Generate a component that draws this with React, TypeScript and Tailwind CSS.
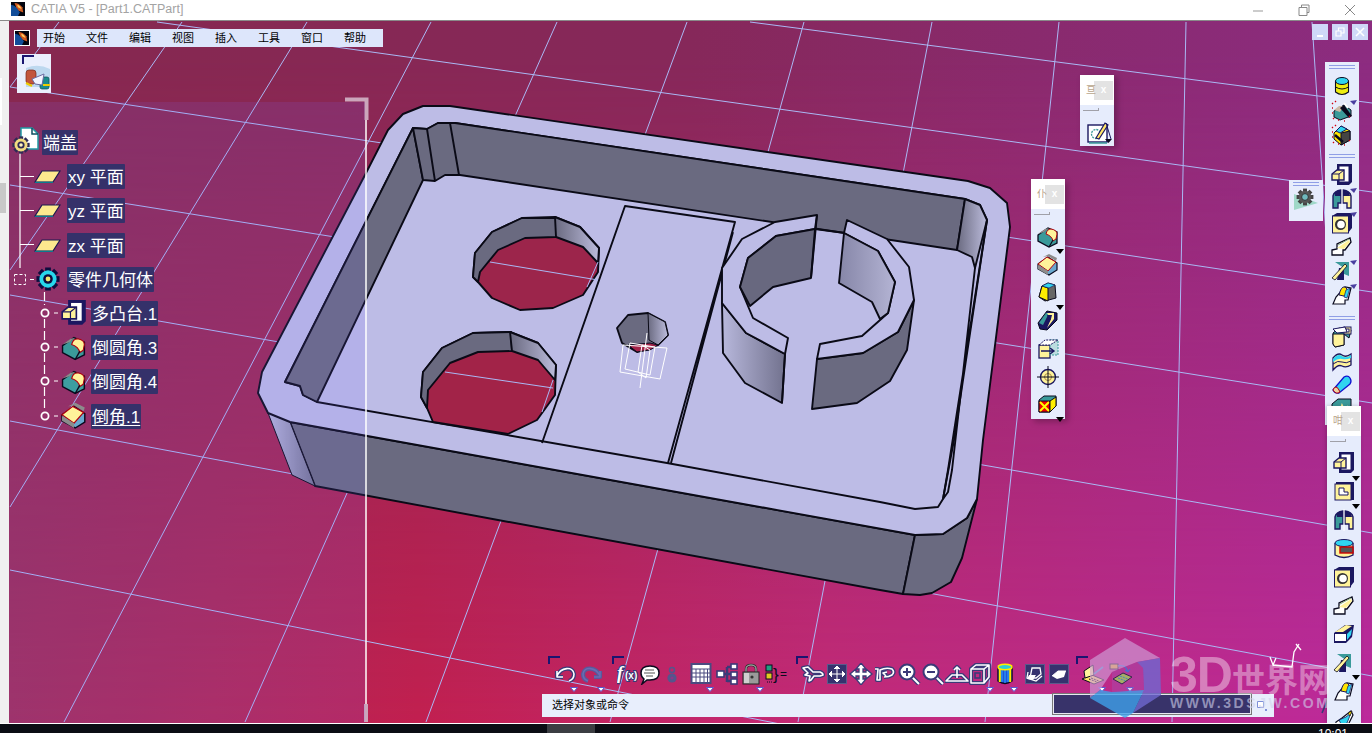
import React from "react";

const N = "#1b1760", Y = "#fff39a", T = "#3a9a9a", C = "#30d4f0", K = "#0a0a1e";

function G({ w = 22, h = 22, children }: { w?: number; h?: number; children: React.ReactNode }) {
  return <svg width={w} height={h} viewBox={`0 0 ${w} ${h}`}>{children}</svg>;
}

/* ---------- part design icons ---------- */
const Pad = () => (
  <G>
    <polygon points="6,0 21,0 21,18 18,21 6,21" fill={N} />
    <rect x="8.500" y="2.500" width="9" height="15" fill="#fff" />
    <polygon points="1,10 6,6 13,6 13,16 1,16" fill={Y} stroke={N} strokeWidth="1.4" />
    <path d="M1 10h7l5-4M8 10v6" stroke={N} fill="none" />
  </G>
);
const Pocket = () => (
  <G>
    <rect x="3" y="1" width="18" height="18" fill={N} />
    <rect x="2" y="3" width="16" height="16" fill={Y} stroke={N} />
    <path d="M6 7h5v4h4v3H6z" fill="#fff" stroke={N} />
  </G>
);
const Shaft = () => (
  <G>
    <path d="M2 20V8q1-5 8-6v13H7v5z" fill={T} stroke={N} strokeWidth="1.4" />
    <path d="M12 2q7 1 8 6v12h-4v-5h-4z" fill={Y} stroke={N} strokeWidth="1.4" />
    <path d="M4 4l6-2v6H4z" fill={N} />
    <path d="M12 2l6 2 1 4h-7z" fill={N} />
    <path d="M11 0v22" stroke="#fff" />
  </G>
);
const Groove = () => (
  <G>
    <path d="M2 5v12q9 5 18 0V5" fill={Y} stroke={N} strokeWidth="1.3" />
    <ellipse cx="11" cy="5" rx="9" ry="3.5" fill={C} stroke={N} />
    <rect x="7" y="9" width="13" height="6" fill="#555" stroke="#c00" strokeWidth="1.4" />
  </G>
);
const Hole = () => (
  <G>
    <polygon points="1,4 6,1 21,1 21,16 17,21 1,21" fill={N} />
    <rect x="1.500" y="4" width="16" height="17" fill={Y} stroke={N} />
    <circle cx="9.500" cy="12.500" r="5.500" fill="#333" />
    <circle cx="10" cy="12.500" r="3.800" fill="#fff" />
  </G>
);
const Rib = () => (
  <G>
    <path d="M1 14l5-1 0-5L19 2l1 4-6 8h-2v5H1z" fill="#fff" stroke={K} strokeWidth="1.3" />
    <polygon points="6,12 18,4 19,6 13,13" fill={Y} />
    <path d="M7 9l11-6" stroke="#8a7" />
  </G>
);
const Slot = () => (
  <G>
    <path d="M1 10L12 2h9l-2 12-6 6H1z" fill={N} />
    <polygon points="2,9 13,2 19,3 10,9" fill={Y} />
    <rect x="2" y="11" width="11" height="7" fill="#fff" />
    <polygon points="14,11 19,6 18,12 14,17" fill={C} />
  </G>
);
const Stiff = () => (
  <G>
    <polygon points="4,2 18,2 18,16 13,14 13,8" fill={T} />
    <polygon points="8,8 13,8 13,20 6,20" fill={N} />
    <polygon points="1,18 14,4 16,6 4,20" fill={Y} stroke={K} strokeWidth=".8" />
  </G>
);
const Loft = () => (
  <G>
    <path d="M2 20l3-7 9-10 6 1-3 12h-3v4z" fill="#fff" stroke={K} strokeWidth="1.2" />
    <path d="M8 11q2-9 6-8 3 1 2 8l-3 1z" fill="#ffe600" stroke={N} />
    <path d="M15 6l4-2-3 10-3-1z" fill={C} stroke={N} strokeWidth=".7" />
  </G>
);
const RemLoft = () => (
  <G>
    <path d="M2 20l1-7 6-4 9-7 2 4-5 10v4z" fill="#fff" stroke={K} strokeWidth="1.2" />
    <path d="M6 11l3 6 5-3 4-10-5 4z" fill={C} stroke={N} strokeWidth=".8" />
    <path d="M15 4l4-2-2 5z" fill="#ffe600" stroke={K} strokeWidth=".7" />
  </G>
);
const Fillet = ({ c = T }: { c?: string }) => (
  <G>
    <polygon points="1,9 11,2 20,6 20,17 12,21 1,15" fill={c} stroke={K} strokeWidth="1.3" />
    <polygon points="1,8 8,3 12,2 7,6" fill="#8c8c8c" />
    <path d="M9 8q1-5 5-5 6 1 6 5l-1 5-3 2q-1-5-7-7z" fill={Y} stroke="#b00010" strokeWidth="1" />
    <path d="M12 21l4-7" stroke={K} strokeWidth="1.2" />
  </G>
);
const Chamfer = () => (
  <G>
    <polygon points="1,10 11,3 20,9 20,16 12,21 1,15" fill="#69a8cf" stroke={K} strokeWidth="1.2" />
    <polygon points="1,10 10,3 19,8 11,17" fill={Y} stroke="#b00010" />
    <polygon points="6,3 12,0 20,4 19,7 11,2" fill="#8c8c8c" />
    <polygon points="1,11 11,17 11,21 1,15" fill="#8c8c8c" />
  </G>
);
const Draft = () => (
  <G>
    <polygon points="5,4 11,1 18,3 19,16 8,19 2,15" fill="#666" stroke={K} />
    <polygon points="5,4 11,6 11,19 2,15" fill="#ffee00" stroke={K} />
    <polygon points="5,4 11,1 18,3 12,6" fill={C} stroke={N} strokeWidth=".6" />
  </G>
);
const Shell = () => (
  <G>
    <polygon points="1,13 10,1 20,3 20,10 10,20 3,19" fill={N} stroke={K} />
    <polygon points="2,13 9,3 12,3 6,15" fill={T} />
    <path d="M10 3h7v6l-7 9 4-9z" fill={Y} />
    <path d="M10 5h5l-1 4-5 8 3-8z" fill={N} />
  </G>
);
const Thick = () => (
  <G>
    <rect x="2" y="7" width="11" height="13" fill={Y} stroke={N} strokeWidth="1.3" />
    <rect x="13" y="2" width="8" height="15" fill="#bcdde0" stroke={T} strokeDasharray="2 1" />
    <polygon points="2,7 8,2 21,2 13,7" fill="#fff" stroke={N} strokeDasharray="2 1" />
    <path d="M4 13h12M13 10l4 3-4 3" stroke={N} fill="none" strokeWidth="1.4" />
  </G>
);
const Target = () => (
  <G>
    <circle cx="11" cy="11" r="7.500" fill={Y} stroke={N} strokeWidth="1.4" />
    <circle cx="11" cy="11" r="3.500" fill="none" stroke="#aa8a40" />
    <path d="M11 0v22M0 11h22" stroke={K} />
  </G>
);
const CubeX = () => (
  <G>
    <polygon points="2,6 7,2 19,2 19,12 13,18 2,18" fill={T} stroke={K} />
    <polygon points="2,7 13,7 13,18 2,18" fill="#e00" stroke={K} />
    <path d="M3 8l9 9M12 8l-9 9" stroke="#ff0" strokeWidth="2" />
    <polygon points="13,7 19,3 19,12 13,18" fill="#ffee00" stroke={K} />
  </G>
);
const YCyl = () => (
  <G>
    <path d="M4.500 5v11q6.500 5 13 0V5" fill="#eeee10" stroke={K} strokeWidth="1.1" />
    <path d="M4.500 11q6.500 4 13 0" stroke={K} fill="none" />
    <ellipse cx="11" cy="5" rx="6.500" ry="3.500" fill={C} stroke={K} />
  </G>
);
const Sparks = ({ dark = false }: { dark?: boolean }) => (
  <G>
    {dark ? (
      <>
        <polygon points="3,9 10,2 19,7 19,16 10,21 3,15" fill="#ffe700" stroke={K} />
        <polygon points="10,9 19,7 19,16 10,21" fill="#444" stroke={K} />
        <polygon points="5,7 10,2 16,5 9,9" fill={C} stroke={N} />
        <path d="M4 11l8 7" stroke={K} strokeWidth="2.500" />
      </>
    ) : (
      <>
        <polygon points="3,11 13,5 20,10 20,16 9,20 3,17" fill={T} stroke={K} />
        <polygon points="3,10 8,6 13,6 9,12" fill="#cbb9a6" />
        <path d="M13 5l8 11-3 2-9-10z" fill={K} />
        <path d="M13 3l4 5" stroke="#fff" strokeWidth="2" />
      </>
    )}
    <path d="M1 3l1 1M4 1l1 1M1 8h1M1 13h1M2 18l1 1M7 20h1M13 21h1M18 16l1 1" stroke="#d00010" strokeWidth="1.3" />
  </G>
);
const Split = () => (
  <G>
    <polygon points="2,7 8,2 20,4 18,12 13,8 13,19 4,21 2,18" fill={T} stroke={K} />
    <polygon points="2,8 13,8 13,19 4,21 2,18" fill={Y} stroke={K} />
    <rect x="13" y="1" width="7" height="7" fill={Y} stroke={N} />
    <rect x="15" y="3" width="3" height="3" fill="#fff" stroke={N} />
    <polygon points="2,3 14,1 16,6 6,7" fill="#fff" stroke={N} />
  </G>
);
const Wave = () => (
  <G>
    <path d="M2 8q5-6 9-3t9-1v11q-5 3-9 1t-9 4z" fill={Y} stroke={N} strokeWidth="1.3" />
    <path d="M2 9q5-6 9-3t9-1v3q-5 2-9 1t-9 3z" fill={C} />
    <path d="M2 14q5-4 9-2t9-1" stroke={N} fill="none" />
  </G>
);
const Capsule = () => (
  <G>
    <path d="M2 16L13 3q4-2 6 1t0 6L8 19q-4 1-6-3z" fill={C} stroke="#1010d0" strokeWidth="1.3" />
    <path d="M2 16q1-3 3-3t4 5q-4 3-7-2z" fill="#f0d0a0" stroke="#b00010" />
  </G>
);
const Spiky = () => (
  <G>
    <polygon points="1,6 7,1 20,1 20,22 1,22" fill={T} stroke={K} />
    <path d="M6 9l3 4 2-6 3 6 3-5" stroke={Y} strokeWidth="1.5" fill="none" />
  </G>
);
const SketchIco = () => (
  <G w={26} h={24}>
    <rect x="1" y="4" width="19" height="17" fill="#fff" stroke={N} strokeWidth="1.4" />
    <path d="M2 22h18" stroke={T} strokeWidth="1.5" />
    <circle cx="9" cy="13" r="4.500" fill="none" stroke={T} strokeDasharray="2 1" strokeWidth="1.3" />
    <path d="M9 17L18 2l3 2-9 14z" fill="#ffe66a" stroke={N} strokeWidth="1.2" />
    <path d="M19 2l5 16" stroke={N} />
    <polygon points="18,18 25,18 21.500,22" fill={K} />
  </G>
);
const GearIco = () => (
  <svg width="26" height="22" viewBox="0 0 26 22">
    <polygon points="1,6 25,15 1,22" fill="#9fd8c8" />
    <g transform="translate(12 9)">
      {[0, 45, 90, 135].map((a) => (
        <rect key={a} x="-8.400" y="-2" width="16.800" height="4" transform={`rotate(${a})`} fill="#444" />
      ))}
      <circle r="6.200" fill="#555" />
      <circle r="3.400" fill="#6fb8bc" stroke="#333" />
    </g>
  </svg>
);

/* ---------- logo ---------- */
const CatiaLogo = ({ s = 14 }: { s?: number }) => (
  <svg width={s} height={s} viewBox="0 0 16 16">
    <rect width="16" height="16" fill="#02050f" />
    <path d="M0 3q7 1 10 9l-2 4H0z" fill="#1766c8" opacity=".75" />
    <path d="M4 1q5 0 9 5l1 6-5-2-3-4z" fill="#d05a20" />
    <path d="M7 3q4 1 5 5l-4-2z" fill="#ffd060" />
  </svg>
);

/* ---------- tree icons ---------- */
const TreeGear = ({ c1, c2, c3, s = 18 }: { c1: string; c2: string; c3: string; s?: number }) => (
  <svg width={s} height={s} viewBox="-10 -10 20 20">
    {[0, 45, 90, 135].map((a) => (
      <rect key={a} x="-9.600" y="-2.400" width="19.200" height="4.800" transform={`rotate(${a})`} fill={c1} />
    ))}
    <circle r="7.200" fill={c2} />
    <circle r="4" fill={c1} />
    <circle r="2" fill={c3} />
  </svg>
);
const RootIcon = () => (
  <div className="relative w-[27px] h-[27px]">
    <svg className="absolute left-[8px] top-[-2px]" width="19" height="23" viewBox="0 0 19 23">
      <path d="M1 1h11l6 6v15H1z" fill="#fff" stroke="#1f9aa4" strokeWidth="1.5" />
      <path d="M12 1v6h6" fill="none" stroke="#0d4e60" strokeWidth="1.5" />
    </svg>
    <div className="absolute left-0 top-[7px]">
      <TreeGear c1="#2e2b55" c2="#f1dc80" c3="#fff6c0" />
    </div>
  </div>
);
const PlaneIco = () => (
  <svg width="27" height="13" viewBox="0 0 27 13">
    <polygon points="1,12 19,12 26,1 8,1" fill="#fde88e" stroke="#1a1850" strokeWidth="1.2" />
    <path d="M1 12.500h18" stroke="#0a7a90" strokeWidth="1.4" />
  </svg>
);

/* ---------- bottom toolbar icons ---------- */
const Dual = ({ d, a = "#fff", b = "#3b3a78", w = 1.6 }: { d: string; a?: string; b?: string; w?: number }) => (
  <>
    <path d={d} fill="none" stroke={b} strokeWidth={w + 2.6} strokeLinejoin="round" />
    <path d={d} fill="none" stroke={a} strokeWidth={w} strokeLinejoin="round" />
  </>
);
const B = ({ children }: { children: React.ReactNode }) => (
  <svg width="24" height="22" viewBox="0 0 24 22">{children}</svg>
);
const Framed = ({ children }: { children: React.ReactNode }) => (
  <B>
    <rect x="2.500" y="1.500" width="19" height="19" fill="#36326e" stroke="#5a5a8c" />
    {children}
  </B>
);
const bottomIcons: Record<string, React.ReactNode> = {
  undo: <B><Dual d="M4 8v6h6M4 13C8 4 20 3 21 11c0 4-2 6-5 7" /></B>,
  redo: <B><Dual d="M20 8v6h-6M20 13C16 4 4 3 3 11c0 4 2 6 5 7" a="#6a6cb4" b="#575a9c" /></B>,
  fx: (
    <svg width="24" height="22" viewBox="0 0 24 22">
      <text x="0" y="16" fontFamily="Liberation Serif" fontStyle="italic" fontWeight="700" fontSize="18" fill="#fff" stroke="#3b3a78" strokeWidth="2.400" paintOrder="stroke">f</text>
      <text x="8" y="16" fontFamily="Liberation Sans" fontWeight="700" fontSize="10" fill="#fff" stroke="#3b3a78" strokeWidth="2" paintOrder="stroke">(x)</text>
    </svg>
  ),
  chat: (
    <B>
      <path d="M3 10q0-7 9-7t9 7-9 7l-3 0-5 4 2-5q-3-2-3-6z" fill="#fff" stroke={K} strokeWidth="1.5" />
      <path d="M7 7h9M6 10h11M8 13h7" stroke="#555" />
    </B>
  ),
  lockp: (
    <B>
      <circle cx="12" cy="7" r="2.500" fill="none" stroke="#55558c" strokeWidth="1.5" />
      <circle cx="12" cy="15" r="4.600" fill="#55558c" />
      <circle cx="12" cy="15" r="1.600" fill="#8a3a88" />
    </B>
  ),
  table: (
    <B>
      <rect x="2.500" y="1" width="19" height="19" fill="#fff" stroke="#4a4a80" strokeWidth="2" />
      <path d="M3 6h18M3 10h18M3 14h18M7 6v14M11 6v14M15 6v14M18.500 6v14" stroke="#4a4a80" />
    </B>
  ),
  tree: (
    <B>
      <path d="M6 11h5M11 4v15M11 4h4M11 11h4M11 18h4" stroke="#3b3a78" strokeWidth="2.500" />
      <rect x="1" y="8" width="7" height="6" fill="#fff" stroke="#3b3a78" strokeWidth="1.6" />
      <rect x="15" y="1" width="6" height="5" fill="#fff" stroke="#3b3a78" strokeWidth="1.6" />
      <rect x="15" y="9" width="6" height="5" fill="#fff" stroke="#3b3a78" strokeWidth="1.6" />
      <rect x="15" y="16" width="6" height="5" fill="#fff" stroke="#3b3a78" strokeWidth="1.6" />
    </B>
  ),
  lock: (
    <B>
      <path d="M7 9V6q0-4 5-4t5 4v3" fill="none" stroke="#333" strokeWidth="2.500" />
      <path d="M7 9V6q0-4 5-4t5 4v3" fill="none" stroke="#bbb" />
      <rect x="4" y="9" width="16" height="12" fill="#9a9a9a" stroke="#222" />
      <rect x="5" y="10" width="5" height="10" fill="#d0d0d0" />
      <circle cx="13" cy="14" r="1.600" fill="#333" />
    </B>
  ),
  eq: (
    <svg width="24" height="22" viewBox="0 0 24 22">
      <rect x="1" y="2" width="6" height="6" fill="#20a080" stroke={K} />
      <rect x="1" y="10" width="6" height="6" fill="#e0c820" stroke={K} />
      <path d="M2 19h1M4 19h1M6 19h1" stroke={K} />
      <text x="8" y="17" fontFamily="Liberation Sans" fontSize="17" fill={K}>{"}"}</text>
      <text x="15" y="15" fontFamily="Liberation Sans" fontSize="12" fill={K}>=</text>
    </svg>
  ),
  plane: <B><Dual d="M2 5l5-1 5 5 7 0q3 1 3 3l-3 1-6 0-3 4-2 1 1-5-5-1 3-2z" /></B>,
  fit: (
    <Framed>
      <path d="M12 3v16M4 11h16" stroke="#fff" />
      <path d="M9 6l3-3 3 3M9 16l3 3 3-3M7 8l-3 3 3 3M17 8l3 3-3 3" fill="#fff" stroke="#fff" />
    </Framed>
  ),
  pan: (
    <B>
      <path d="M12 0l5 6h-3v3h3V6l6 5-6 5v-3h-3v3h3l-5 6-5-6h3v-3H7v3l-6-5 6-5v3h3V6H7z" fill="#fff" stroke="#3b3a78" strokeWidth="1.300" />
    </B>
  ),
  rotate: <B><Dual d="M2 6h3l-1 11h3V7q6-3 12-1 3 3 0 6-3 2-8 2M14 9l-4 1 3 3" /></B>,
  zin: (
    <B>
      <path d="M15 14l7 7" stroke="#3b3a78" strokeWidth="4.500" />
      <path d="M15 14l7 7" stroke="#fff" strokeWidth="2" />
      <circle cx="10" cy="9" r="7.500" fill="#fff" stroke="#3b3a78" strokeWidth="2" />
      <path d="M6 9h8M10 5v8" stroke="#3b3a78" strokeWidth="2" />
    </B>
  ),
  zout: (
    <B>
      <path d="M15 14l7 7" stroke="#3b3a78" strokeWidth="4.500" />
      <path d="M15 14l7 7" stroke="#fff" strokeWidth="2" />
      <circle cx="10" cy="9" r="7.500" fill="#fff" stroke="#3b3a78" strokeWidth="2" />
      <path d="M6 9h8" stroke="#3b3a78" strokeWidth="2" />
    </B>
  ),
  normal: <B><Dual d="M1 18l6-6h10l6 6zM12 15V4M9 7l3-3 3 3" /></B>,
  cube: (
    <B>
      <Dual d="M2 6h13v14H2zM2 6l5-4h13l-5 4M20 2v12l-5 6" />
      <rect x="6" y="10" width="5" height="5" fill="none" stroke="#3b3a78" strokeWidth="1.6" />
    </B>
  ),
  cyl: (
    <B>
      <path d="M5 4v14q7 5 14 0V4z" fill="#1e50e0" stroke={K} strokeWidth="1.4" />
      <rect x="5.800" y="5" width="2" height="14" fill="#ffee00" />
      <rect x="16.200" y="5" width="2" height="14" fill="#ffee00" />
      <path d="M9 5v14M12 5v15M15 5v14" stroke="#30b0f0" />
      <ellipse cx="12" cy="4" rx="7" ry="2.800" fill="#30d0d0" stroke="#ffee00" strokeWidth="1.5" />
    </B>
  ),
  hide: (
    <Framed>
      <path d="M9 5h8l1 6-5 4H7zM5 9l-1 6 9 3 6-5" fill="none" stroke="#fff" strokeWidth="1.3" />
      <polygon points="6,12 13,12 10,17 4,16" fill="#fff" />
    </Framed>
  ),
  swap: (
    <Framed>
      <polygon points="5,13 11,8 19,8 17,14 10,16" fill="#fff" />
      <path d="M5 13l6-5h8" stroke="#fff" fill="none" />
    </Framed>
  ),
  tool1: (
    <B>
      <polygon points="1,16 11,12 23,17 13,21" fill="#ffe66a" stroke={K} />
      <polygon points="3,8 12,2 13,12 4,15" fill="#fff39a" stroke={K} />
      <path d="M13 11L22 4" stroke="#4a90d0" strokeWidth="1.6" />
      <path d="M10 15l8 3M8 16l8 3" stroke={K} strokeDasharray="2 1" />
    </B>
  ),
  tool2: (
    <B>
      <rect x="1" y="1" width="8" height="5" fill="#e8b020" stroke={K} />
      <path d="M9 3q8-2 10 6M19 9l-3-2M19 9l2-3" stroke="#3070d0" fill="none" strokeWidth="1.3" />
      <polygon points="4,16 14,10 23,14 13,21" fill="#a8d040" stroke={K} />
      <path d="M9 15l8 3M11 13l8 3" stroke="#2090c0" strokeDasharray="2 1" />
    </B>
  ),
};

const Tri = () => (
  <svg width="8" height="5" viewBox="0 0 8 5">
    <polygon points="0.5,0.5 7.5,0.5 4,4.5" fill="#fff" stroke="#5a5ad0" />
  </svg>
);
const Bracket = ({ cls }: { cls: string }) => (
  <div className={`absolute top-[-7px] w-[12px] h-[8px] border-t-2 border-l-2 border-[#1a1570] ${cls}`} />
);

const slots: { k: string; ml: string; tri?: boolean }[] = [
  { k: "undo", ml: "ml-0", tri: true },
  { k: "redo", ml: "ml-[3px]", tri: true },
  { k: "fx", ml: "ml-[13px]" },
  { k: "chat", ml: "ml-[-3px]" },
  { k: "lockp", ml: "ml-[-2px]" },
  { k: "table", ml: "ml-[5px]", tri: true },
  { k: "tree", ml: "ml-[3px]" },
  { k: "lock", ml: "ml-[-1px]", tri: true },
  { k: "eq", ml: "ml-[2px]" },
  { k: "plane", ml: "ml-[12px]" },
  { k: "fit", ml: "ml-0" },
  { k: "pan", ml: "ml-0" },
  { k: "rotate", ml: "ml-0" },
  { k: "zin", ml: "ml-0" },
  { k: "zout", ml: "ml-0" },
  { k: "normal", ml: "ml-0" },
  { k: "cube", ml: "ml-0", tri: true },
  { k: "cyl", ml: "ml-0", tri: true },
  { k: "hide", ml: "ml-[6px]" },
  { k: "swap", ml: "ml-0" },
  { k: "tool1", ml: "ml-[10px]", tri: true },
  { k: "tool2", ml: "ml-[4px]", tri: true },
];

/* ---------- floating toolbar helpers ---------- */
const Grip = ({ cls = "" }: { cls?: string }) => (
  <div className={`mx-[4px] h-[4px] border-y border-[#8f9ee6] ${cls}`} />
);
const Header = ({ glyph }: { glyph: string }) => (
  <div className="h-[30px] bg-white flex items-center justify-end pr-[1px] relative">
    <span className="absolute left-[6px] text-[10px] text-[#b9a58c] leading-none">{glyph}</span>
    <div className="w-[19px] h-[19px] bg-[#e3e3e3] flex items-center justify-center text-white text-[10px] font-bold leading-none">x</div>
  </div>
);
const FloatLine = () => (
  <div className="ml-[3px] mt-[3px] w-[16px] h-[3px] border-b border-r border-[#a0a0a8]" />
);
const Item = ({ h, children, mark }: { h: string; children: React.ReactNode; mark?: "blue" | "black" }) => (
  <div className={`relative flex items-center justify-center ${h}`}>
    {children}
    {mark === "black" && (
      <svg className="absolute right-[1px] bottom-[-3px]" width="8" height="5" viewBox="0 0 8 5">
        <polygon points="0,0 8,0 4,5" fill="#000" />
      </svg>
    )}
    {mark === "blue" && (
      <svg className="absolute right-[2px] top-[1px]" width="7" height="5" viewBox="0 0 7 5">
        <polygon points="0,1 7,0 4,5" fill="#4a3fa0" />
      </svg>
    )}
  </div>
);

const treeRows = [
  { t: "xy 平面", pl: "pl-[25px]", ico: <PlaneIco />, gap: "ml-[6px]" },
  { t: "yz 平面", pl: "pl-[25px]", ico: <PlaneIco />, gap: "ml-[6px]" },
  { t: "zx 平面", pl: "pl-[25px]", ico: <PlaneIco />, gap: "ml-[6px]" },
];

function Label({ children, u }: { children: React.ReactNode; u?: boolean }) {
  return (
    <span className={`h-[25px] px-px bg-[#35316a] text-white text-[17px] leading-[27px] whitespace-nowrap rounded-[1px] ${u ? "underline underline-offset-2" : ""}`}>
      {children}
    </span>
  );
}

function Scene() {
  const stroke = { stroke: "#0a0a16", strokeWidth: 1.9, strokeLinejoin: "round" as const };
  const gridLines = [
    [157, 22, 1372, 192], [750, 22, 1372, 103], [10, 87, 1372, 292], [10, 185, 1372, 403], [10, 295, 1372, 533], [10, 421, 1372, 676], [10, 570, 800, 728],
    [59, 22, 10, 87], [182, 22, 10, 270], [307, 22, 10, 507], [431, 22, 64, 722], [557, 22, 245, 722], [687, 22, 426, 722], [804, 22, 610, 722], [932, 22, 798, 722],
    [1059, 22, 985, 722], [1186, 22, 1172, 722], [1312, 22, 1358, 722],
  ];
  return (
    <svg className="absolute inset-0" width="1363" height="702" viewBox="9 21 1363 702">
      <defs>
        <linearGradient id="ga" x1="0" x2="1" y1="0" y2="0"><stop offset="0" stopColor="#6a6a80" /><stop offset="1" stopColor="#bcbcdc" /></linearGradient>
        <linearGradient id="gb" x1="0" x2="1" y1="0" y2="0"><stop offset="0" stopColor="#b8b8dc" /><stop offset="1" stopColor="#72728e" /></linearGradient>
        <linearGradient id="gc" x1="0" x2="1" y1="0" y2="0"><stop offset="0" stopColor="#8686a8" /><stop offset="1" stopColor="#b4b4d4" /></linearGradient>
      </defs>
      {gridLines.map((l, i) => (
        <line key={i} x1={l[0]} y1={l[1]} x2={l[2]} y2={l[3]} stroke="#aab8f4" strokeWidth="1" />
      ))}
      {/* outer faces */}
      <polygon points="290,422 915,535 903,594 880,590 498,520 315,486" fill="#6a6a80" {...stroke} />
      <polygon points="268,413 290,422 315,486 292,475" fill="url(#gb)" {...stroke} strokeWidth={1} />
      <polygon points="915,535 943,534 967,518 977,499 962,558 951,582 932,593 920,595 903,594" fill="#6a6a80" {...stroke} />
      {/* top face */}
      <polygon
        points="262,372 365,175 388,130 403,114 423,106 450,106 968,181 990,188 1007,203 1010,227 983,440 977,499 967,518 943,534 915,535 290,422 268,413 258,393"
        fill="#bdbce6"
        {...stroke}
      />
      {/* floor cavity */}
      <polygon points="285,382 413,128 427,129 438,123 455,123 965,199 980,205 987,220 954,440 943,499 938,507 915,509 880,502 667,463 317,402 303,395 300,386" fill="#bdbce6" {...stroke} />
      {/* walls */}
      <polygon points="285,382 413,128 423,180 317,402 303,395 300,386" fill="#6a6a80" {...stroke} />
      <polygon points="413,128 427,129 438,123 455,123 965,199 957,250 460,175 445,175 435,181 423,180" fill="#6a6a80" {...stroke} />
      <polygon points="965,199 980,205 987,220 975,268 972,257 957,250" fill="url(#ga)" {...stroke} />
      <path d="M427 129l8 52M450 123l9 52M987 220L948 470 943 499M975 268L952 470 948 492 943 499" fill="none" {...stroke} />
      {/* center panel */}
      <path d="M542 443L625 206 735 222 668 463M733 232L671 463" fill="none" {...stroke} />
      {/* hole 1 */}
      <polygon points="473,277 475,253 492,232 522,218 555,217 580,227 599,248 598,272 583,295 553,308 520,310 492,298 478,282" fill="#9c254b" {...stroke} />
      <polygon points="473,277 475,253 492,232 522,218 556,218 556,237 525,238 498,250 480,272 478,282" fill="#6a6a80" {...stroke} />
      <polygon points="555,217 580,227 599,248 598,263 583,247 556,237" fill="url(#ga)" {...stroke} />
      <line x1="490" y1="262" x2="598" y2="280" stroke="#aab8f4" />
      <line x1="598" y1="262" x2="587" y2="287" stroke="#aab8f4" />
      {/* hole 2 */}
      <polygon points="421,397 423,372 442,348 473,333 510,332 538,343 556,365 555,395 537,420 508,434 433,422 427,408" fill="#a22348" {...stroke} />
      <polygon points="421,397 423,372 442,348 473,333 511,332 512,351 478,352 450,363 428,390 427,408" fill="#6a6a80" {...stroke} />
      <polygon points="510,332 538,343 556,365 555,380 538,360 512,351" fill="url(#ga)" {...stroke} />
      <line x1="445" y1="372" x2="553" y2="388" stroke="#aab8f4" />
      <line x1="553" y1="380" x2="542" y2="412" stroke="#aab8f4" />
      {/* small hole */}
      <polygon points="617,328 628,315 648,313 665,322 668,335 658,345 637,352 622,343" fill="#6a6a80" {...stroke} />
      <polygon points="648,313 665,322 668,335 658,345 649,340" fill="url(#ga)" {...stroke} strokeWidth={1} />
      <polygon points="628,345 650,343 658,345 650,350 637,352" fill="#a22348" stroke="#0a0a1e" />
      {/* boss outer walls */}
      <polygon points="722,303 746,333 785,354 782,403 745,383 723,353" fill="url(#gb)" {...stroke} />
      <polygon points="817,359 863,353 898,332 914,300 907,350 890,381 857,403 812,409" fill="#6a6a80" {...stroke} />
      {/* boss top */}
      <polygon points="817,215 775,222 742,239 722,268 722,303 746,333 785,354 788,338 753,318 740,287 748,258 776,236 815,229" fill="#bdbce6" {...stroke} />
      <polygon points="847,220 887,239 909,267 914,300 898,332 863,353 817,359 820,344 862,336 888,313 895,282 878,251 844,233" fill="#bdbce6" {...stroke} />
      {/* boss inner walls */}
      <polygon points="776,236 815,229 811,278 773,287 750,306 740,287 748,258" fill="#68687f" {...stroke} />
      <polygon points="844,233 878,251 895,282 888,313 880,319 872,302 839,283" fill="url(#gc)" {...stroke} />
      <path d="M817 215l-6 63M785 354l-3 49" fill="none" {...stroke} />
      <path d="M815 229l30 4" fill="none" {...stroke} />
      {/* wireframe axis */}
      <g stroke="#fff" strokeWidth="1" fill="none">
        <polygon points="620,372 623,345 667,348 660,379" />
        <polygon points="625,369 630,343 655,347 650,375" />
        <line x1="647" y1="333" x2="640" y2="388" />
        <polygon points="642,345 650,350 646,378 638,372" />
      </g>
      {/* small compass */}
      <path d="M1273 665l19 2 2-15 5-8M1296 644l5 6M1270 657l3 8 3-7" fill="none" stroke="#fff" strokeWidth="1.3" />
      <path d="M1322 713l6-14 3 14M1332 705q4 4 0 10" fill="none" stroke="#3b3a78" strokeWidth="1.6" />
      {/* right corner bracket of the tree panel */}
      <path d="M366 120V722" stroke="#fff" strokeWidth="1.5" />
      <path d="M345 99.500h21.500V120" fill="none" stroke="#cba6bb" strokeWidth="4" />
      <path d="M366 704V722" stroke="#cba6bb" strokeWidth="4" />
    </svg>
  );
}

export default function App() {
  return (
    <div className="w-[1372px] h-[733px] overflow-hidden flex flex-col bg-black font-['Liberation_Sans','Noto_Sans_CJK_SC',sans-serif]">
      {/* title bar */}
      <div className="h-[21px] shrink-0 bg-white border-b border-[#8a8a8a] flex items-center">
        <div className="ml-[11px] mb-[2px]"><CatiaLogo /></div>
        <span className="ml-[6px] mb-[2px] text-[12.500px] text-[#a3a3a3] leading-none">CATIA V5 - [Part1.CATPart]</span>
        <svg className="ml-auto mr-[16px]" width="103" height="12" viewBox="0 0 103 12">
          <path d="M0 7h10" stroke="#999" />
          <path d="M46 3.500h8v8h-8zM48.500 3.500V1h7.500v7.500h-2" fill="none" stroke="#888" />
          <path d="M92 1l10 10M102 1L92 11" stroke="#888" />
        </svg>
      </div>

      {/* body */}
      <div className="flex-1 flex min-h-0">
        <div className="w-[9px] shrink-0 bg-[#f0f0f0] flex flex-col">
          <div className="h-[57px]" />
          <div className="w-[2px] h-[47px] bg-white" />
          <div className="h-[58px]" />
          <div className="w-[6px] h-[30px] bg-[#c8c8c8]" />
        </div>

        {/* 3D viewport */}
        <div className="flex-1 relative overflow-hidden bg-[linear-gradient(90deg,#a42c58_0%,#c22050_30%,#c42a78_60%,#bd2a9c_100%)]">
          <div className="absolute inset-0 bg-[linear-gradient(90deg,#86284f_0%,#86285a_50%,#8c2c80_100%)] [mask-image:linear-gradient(to_bottom,black_5%,transparent_100%)]" />
          <Scene />

          {/* tree panel */}
          <div className="absolute left-0 top-[81px] w-[356px] bottom-0 bg-[#7c70ff]/[.13] pt-[28px] flex flex-col gap-[9.200px]">
            <svg className="absolute left-0 top-0" width="70" height="330" viewBox="9 102 70 330">
              <path d="M20 150V268M20 176.500h14M20 210.500h14M20 244.500h14" stroke="#fff" strokeWidth="1.2" fill="none" />
              <rect x="14.500" y="274.500" width="11" height="10" fill="none" stroke="#fff" strokeDasharray="3 2" />
              <path d="M30 279.500h4" stroke="#fff" />
              <path d="M44.500 292v13M44.500 319v22M44.500 353v22M44.500 387v23" stroke="#fff" strokeWidth="1.2" strokeDasharray="9 3" />
              {[313, 347, 381, 416].map((y) => (
                <g key={y}>
                  <circle cx="45" cy={y} r="3.600" fill="none" stroke="#fff" strokeWidth="1.800" />
                  <path d={`M54 ${y}h4`} stroke="#fff" />
                </g>
              ))}
            </svg>
            <div className="relative flex items-center h-[25px] pl-[3px]">
              <RootIcon />
              <div className="ml-[3px] flex"><Label>端盖</Label></div>
            </div>
            {treeRows.map((r) => (
              <div key={r.t} className={`relative flex items-center h-[25px] ${r.pl}`}>
                {r.ico}
                <div className={`${r.gap} flex`}><Label>{r.t}</Label></div>
              </div>
            ))}
            <div className="relative flex items-center h-[25px] pl-[27px]">
              <TreeGear c1="#0d0d3e" c2="#27d8ec" c3="#f2e870" s={24} />
              <div className="ml-[7px] flex"><Label>零件几何体</Label></div>
            </div>
            <div className="relative flex items-center h-[25px] pl-[51px]">
              <div className="w-[28px] flex justify-center scale-[1.18]"><Pad /></div>
              <div className="ml-[3px] flex"><Label>多凸台.1</Label></div>
            </div>
            <div className="relative flex items-center h-[25px] pl-[51px]">
              <div className="w-[28px] flex justify-center scale-[1.15]"><Fillet /></div>
              <div className="ml-[3px] flex"><Label>倒圆角.3</Label></div>
            </div>
            <div className="relative flex items-center h-[25px] pl-[51px]">
              <div className="w-[28px] flex justify-center scale-[1.15]"><Fillet c="#3d9ea0" /></div>
              <div className="ml-[3px] flex"><Label>倒圆角.4</Label></div>
            </div>
            <div className="relative flex items-center h-[25px] pl-[51px]">
              <div className="w-[28px] flex justify-center scale-[1.2]"><Chamfer /></div>
              <div className="ml-[3px] flex"><Label u>倒角.1</Label></div>
            </div>
          </div>

          {/* menu bar */}
          <div className="absolute left-[5px] top-[8px] flex items-center">
            <div className="border border-white w-[16px] h-[16px]"><CatiaLogo /></div>
            <div className="ml-[7px] w-[346px] h-[18px] bg-[#dde6fb] pl-[6px] flex items-center">
              {["开始", "文件", "编辑", "视图", "插入", "工具", "窗口", "帮助"].map((m) => (
                <span key={m} className="w-[43px] shrink-0 text-[11px] leading-none text-black">{m}</span>
              ))}
            </div>
          </div>

          {/* workbench icon */}
          <div className="absolute left-[8px] top-[33px] w-[34px] h-[39px] bg-[#eaeffd] flex items-end justify-end pb-[2px]">
            <div className="absolute left-[5px] top-[1px] w-[12px] h-[9px] border-t-2 border-l-2 border-[#1a1570]" />
            <svg width="27" height="27" viewBox="0 0 27 27">
              <path d="M2 4q12-5 24 1v18H2z" fill="#bdd8ef" />
              <rect x="2" y="6" width="10" height="14" rx="3" fill="#c2553c" stroke="#7a2a1c" strokeWidth=".7" />
              <rect x="16" y="13" width="9" height="12" rx="2" fill="#1c8a8c" stroke="#0d4e50" strokeWidth=".7" />
              <polygon points="8,15 20,10 18,21 11,20" fill="#f2f4ff" stroke="#6a6aa0" />
              <path d="M2 19l6 3M19 21h7" stroke="#eecc00" strokeWidth="2" />
            </svg>
          </div>

          {/* window buttons */}
          <div className="absolute right-[4px] top-[3px] flex gap-[4px]">
            <div className="w-[16px] h-[16px] bg-[#cfd8f8] flex items-end justify-center pb-[3px]"><div className="w-[6px] h-[2px] bg-white" /></div>
            <div className="w-[16px] h-[16px] bg-[#cfd8f8] flex items-center justify-center">
              <svg width="10" height="10" viewBox="0 0 10 10"><path d="M1 4h5v5H1zM3.500 4V1h5.500v5H6" fill="none" stroke="#fff" strokeWidth="1.200" /></svg>
            </div>
            <div className="w-[16px] h-[16px] bg-[#cfd8f8] flex items-center justify-center">
              <svg width="10" height="10" viewBox="0 0 10 10"><path d="M1 1l8 8M9 1L1 9" stroke="#fff" strokeWidth="1.600" /></svg>
            </div>
          </div>

          {/* sketch floating toolbar */}
          <div className="absolute left-[1071px] top-[54px] w-[34px] h-[71px] bg-[#e6ecfc] shadow-[3px_2px_6px_rgba(0,0,0,0.25)]">
            <Header glyph="亘" />
            <FloatLine />
            <div className="flex justify-end pr-[1px] mt-[10px]"><SketchIco /></div>
          </div>

          {/* dress-up floating toolbar */}
          <div className="absolute left-[1022px] top-[158px] w-[34px] bg-[#e6ecfc] shadow-[3px_3px_6px_rgba(0,0,0,0.25)]">
            <Header glyph="仆" />
            <FloatLine />
            <div className="h-[8px]" />
            <Item h="h-[28px]" mark="black"><Fillet /></Item>
            <Item h="h-[28px]"><Chamfer /></Item>
            <Item h="h-[28px]" mark="black"><Draft /></Item>
            <Item h="h-[28px]"><Shell /></Item>
            <Item h="h-[28px]"><Thick /></Item>
            <Item h="h-[28px]"><Target /></Item>
            <Item h="h-[28px]" mark="black"><CubeX /></Item>
          </div>

          {/* gear toolbar */}
          <div className="absolute left-[1280px] top-[159px] w-[34px] h-[41px] bg-[#e6ecfc] pt-[2px]">
            <Grip />
            <div className="mt-[2px] flex justify-center"><GearIco /></div>
          </div>

          {/* right toolbar */}
          <div className="absolute left-[1316px] top-[41px] w-[34px] bg-[#e6ecfc] pt-[3px] pb-[4px]">
            <Grip />
            <div className="h-[6px]" />
            <Item h="h-[24px]"><YCyl /></Item>
            <Item h="h-[24px]" mark="blue"><Sparks /></Item>
            <Item h="h-[24px]"><Sparks dark /></Item>
            <Grip cls="mt-[7px] mb-[5px]" />
            <Item h="h-[24px]"><Pad /></Item>
            <Item h="h-[24px]" mark="blue"><Shaft /></Item>
            <Item h="h-[24px]" mark="blue"><Hole /></Item>
            <Item h="h-[24px]"><Rib /></Item>
            <Item h="h-[24px]" mark="blue"><Stiff /></Item>
            <Item h="h-[24px]" mark="blue"><Loft /></Item>
            <Grip cls="mt-[9px] mb-[5px]" />
            <Item h="h-[24px]"><Split /></Item>
            <Item h="h-[24px]"><Wave /></Item>
            <Item h="h-[24px]"><Capsule /></Item>
            <Item h="h-[24px]"><Spiky /></Item>
          </div>

          {/* second right toolbar */}
          <div className="absolute left-[1318px] top-[385px] w-[34px] bottom-0 overflow-hidden bg-[#e6ecfc] shadow-[-1px_0_4px_rgba(0,0,0,0.2)]">
            <Header glyph="咁" />
            <FloatLine />
            <div className="h-[7px]" />
            <Item h="h-[28.500px]" mark="black"><Pad /></Item>
            <Item h="h-[28.500px]" mark="black"><Pocket /></Item>
            <Item h="h-[28.500px]"><Shaft /></Item>
            <Item h="h-[28.500px]"><Groove /></Item>
            <Item h="h-[28.500px]"><Hole /></Item>
            <Item h="h-[28.500px]"><Rib /></Item>
            <Item h="h-[28.500px]"><Slot /></Item>
            <Item h="h-[28.500px]" mark="black"><Stiff /></Item>
            <Item h="h-[28.500px]"><Loft /></Item>
            <Item h="h-[28.500px]"><RemLoft /></Item>
          </div>

          {/* bottom toolbar */}
          <div className="absolute left-[544px] top-[642px] flex">
            <Bracket cls="left-[-5px]" />
            <Bracket cls="left-[59px]" />
            <Bracket cls="left-[243px]" />
            <Bracket cls="left-[523px]" />
            {slots.map((s) => (
              <div key={s.k} className={`w-[24px] flex flex-col ${s.ml}`}>
                <div className="h-[24px]">{bottomIcons[s.k]}</div>
                {s.tri && <div className="self-end mr-[-1px]"><Tri /></div>}
              </div>
            ))}
          </div>

          {/* status bar */}
          <div className="absolute left-[533px] top-[673px] w-[732px] h-[23px] bg-[#e8eefc] pl-[10px] flex items-start">
            <span className="text-[11px] leading-[22px] text-black">选择对象或命令</span>
            <div className="ml-auto w-[198px] h-[20px] bg-[#38336a] border border-[#e8e8f0] outline outline-[#777]" />
            <svg className="ml-[6px] mr-[6px] mt-[7px]" width="11" height="11" viewBox="0 0 11 11">
              <path d="M.5.5h6v6h-6z" fill="#fff" stroke="#7f8fd8" />
              <rect x="8" y="8" width="2" height="2" fill="#7f8fd8" />
            </svg>
          </div>

          {/* watermark */}
          <div className="absolute left-[1081px] top-[617px] w-[260px] h-[85px] pointer-events-none">
            <svg className="absolute left-0 top-0" width="72" height="81" viewBox="1090 638 72 81">
              <path fillRule="evenodd" d="M1090 660L1125 638 1160 658 1161 695 1125 718 1090 698z" fill="none" />
              <polygon points="1090,660 1125,638 1160,658 1137,662 1112,672 1100,690 1090,698" fill="#cfa0d8" opacity=".65" />
              <polygon points="1160,658 1161,695 1133,713 1144,690 1143,668 1137,662" fill="#6f68d0" opacity=".8" />
              <polygon points="1090,698 1100,690 1112,692 1144,690 1133,713 1125,718" fill="#3fa0ea" opacity=".8" />
              <polygon points="1112,672 1137,662 1143,668 1144,690 1112,692" fill="#9a60c0" opacity=".3" />
            </svg>
            <div className="absolute left-[80px] top-[12px] flex items-baseline text-white/40 font-bold leading-none whitespace-nowrap">
              <span className="text-[50px] tracking-[-1px]">3D</span>
              <span className="text-[33px]">世界网</span>
            </div>
            <div className="absolute left-[80px] top-[58px] text-[14px] leading-[14px] font-bold tracking-[2.600px] text-[#d0d2ec]/60 whitespace-nowrap">WWW.3DSJW.COM</div>
          </div>
        </div>
      </div>

      {/* taskbar */}
      <div className="h-px shrink-0 bg-white" />
      <div className="h-[9px] shrink-0 bg-[#0b0d14] relative flex overflow-hidden">
        <div className="ml-[547px] w-[48px] h-full bg-[#3b3d42]" />
        <span className="ml-[723px] mt-[4px] text-[12px] leading-none text-white">10:01</span>
      </div>
    </div>
  );
}
